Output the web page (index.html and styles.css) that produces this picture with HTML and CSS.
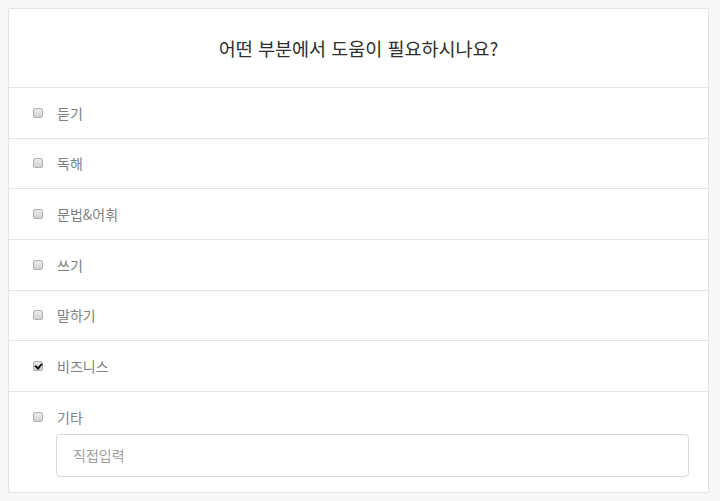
FILE: index.html
```html
<!DOCTYPE html>
<html lang="ko">
<head>
<meta charset="utf-8">
<link rel="stylesheet" href="styles.css">
</head>
<body>
<div class="card">
  <div class="card-header">어떤 부분에서 도움이 필요하시나요?</div>
  <ul class="options">
    <li class="option"><label class="opt-label"><input type="checkbox" class="cb"><span>듣기</span></label></li>
    <li class="option"><label class="opt-label"><input type="checkbox" class="cb"><span>독해</span></label></li>
    <li class="option"><label class="opt-label"><input type="checkbox" class="cb"><span>문법&amp;어휘</span></label></li>
    <li class="option"><label class="opt-label"><input type="checkbox" class="cb"><span>쓰기</span></label></li>
    <li class="option"><label class="opt-label"><input type="checkbox" class="cb"><span>말하기</span></label></li>
    <li class="option"><label class="opt-label"><input type="checkbox" class="cb" checked><span>비즈니스</span></label></li>
    <li class="option option-last">
      <label class="opt-label"><input type="checkbox" class="cb"><span>기타</span></label>
      <input type="text" class="text-input" placeholder="직접입력">
    </li>
  </ul>
</div>
</body>
</html>
```

FILE: styles.css
```css
html, body {
  margin: 0;
  padding: 0;
}
body {
  background: #f7f7f7;
  font-family: "Noto Sans CJK KR", "Noto Sans", sans-serif;
  padding: 8px 11px 9px 8px;
}
.card {
  background: #fff;
  border: 1px solid #e3e3e3;
  border-radius: 2px;
}
.card-header {
  height: 78px;
  display: flex;
  align-items: center;
  justify-content: center;
  font-size: 18.5px;
  font-weight: 400;
  color: #2e2e2e;
  border-bottom: 1px solid #e3e3e3;
}
.options {
  list-style: none;
  margin: 0;
  padding: 0;
}
.option {
  height: 49.67px;
  border-bottom: 1px solid #e3e3e3;
  display: flex;
  flex-direction: column;
  justify-content: center;
  padding-left: 24px;
}
.option-last {
  border-bottom: none;
  height: auto;
  justify-content: flex-start;
  padding-top: 15px;
  padding-bottom: 15px;
  padding-right: 19px;
}
.opt-label {
  display: flex;
  align-items: center;
  gap: 14px;
  font-size: 14px;
  color: #808080;
  line-height: 20px;
}
.cb {
  appearance: none;
  -webkit-appearance: none;
  margin: 0;
  width: 10px;
  height: 10px;
  border: 1px solid #b0b0b0;
  border-radius: 2px;
  background: linear-gradient(#ececec, #d2d2d2);
  box-sizing: border-box;
  position: relative;
}
.cb:checked::after {
  content: "";
  position: absolute;
  left: 2px;
  top: 0px;
  width: 3px;
  height: 5px;
  border-right: 2px solid #111;
  border-bottom: 2px solid #111;
  transform: rotate(40deg);
}
.text-input {
  margin-top: 7px;
  margin-left: 23px;
  height: 43px;
  box-sizing: border-box;
  border: 1px solid #d9d9d9;
  border-radius: 4px;
  padding: 0 16px;
  font-family: inherit;
  font-size: 14px;
  color: #555;
}
.text-input::placeholder {
  color: #a0a0a0;
}
```
